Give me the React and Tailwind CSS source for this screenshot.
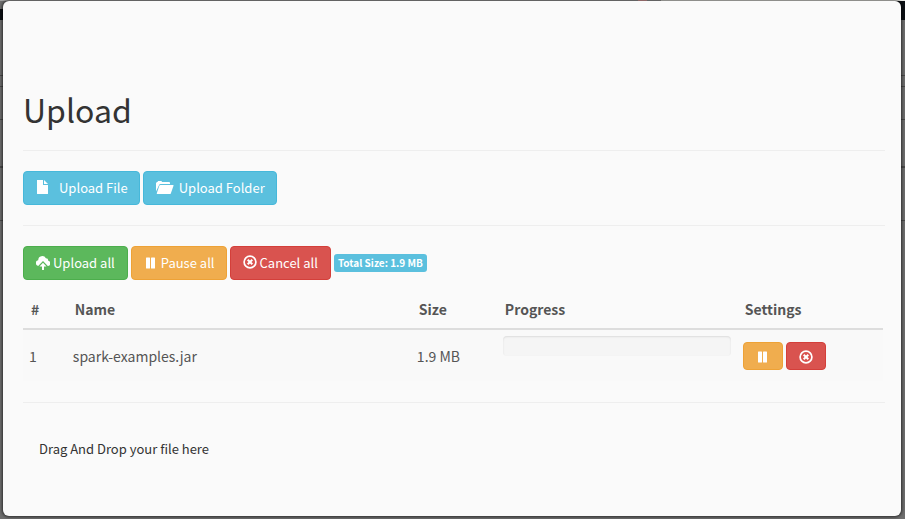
import React from "react";

function Icon({ children, className = "" }) {
  return (
    <svg viewBox="0 0 14 14" aria-hidden="true" className={`h-3.5 w-3.5 shrink-0 fill-current ${className}`}>
      {children}
    </svg>
  );
}

function FileIcon() {
  return (
    <Icon className="mb-0.5">
      <path d="M1 0h6v5h5v8.500a.5.500 0 0 1-.5.500H1.500a.5.500 0 0 1-.5-.5z" />
      <path d="M8 0l4 4H8z" />
    </Icon>
  );
}

function FolderIcon() {
  return (
    <svg viewBox="0 0 18 14" aria-hidden="true" className="mb-0.5 h-3.5 w-[18px] shrink-0 fill-current">
      <path d="M0 11.500V3l1-1h.5l.500-1h3.500l.500 1H13a1 1 0 0 1 1 1v1H4.500a1.500 1.500 0 0 0-1.400 1z" />
      <path d="M4.300 5H17a.5.5 0 0 1 .5.700l-2.700 7.700a1 1 0 0 1-.9.600H1.200a.5.5 0 0 1-.4-.7l2.600-7.700a1 1 0 0 1 .9-.6z" />
    </svg>
  );
}

function CloudUploadIcon() {
  return (
    <Icon>
      <path d="M2.200 10L7 5 11.800 10a2.700 2.700 0 0 0 .5-5.300A2.400 2.400 0 0 0 9.900 2.300 4.100 4.100 0 0 0 2.200 4.200 2.950 2.950 0 0 0 2.200 10z" />
      <path d="M7 6.700l3.500 3.800H8V13.500a.5.500 0 0 1-.5.500h-1a.5.500 0 0 1-.5-.5v-3H3.500z" />
    </Icon>
  );
}

function PauseIcon() {
  return (
    <Icon>
      <rect x="2" y="1.500" width="4" height="11" rx="0.5" />
      <rect x="7" y="1.500" width="4" height="11" rx="0.5" />
    </Icon>
  );
}

function RemoveCircleIcon({ className = "" }) {
  return (
    <Icon className={className}>
      <circle cx="7" cy="7" r="5.900" fill="none" stroke="currentColor" strokeWidth="1.700" />
      <path d="M4.700 4.700l4.600 4.600M9.300 4.700L4.700 9.300" stroke="currentColor" strokeWidth="2" />
    </Icon>
  );
}

const tones = {
  info: "border-[#46b8da] bg-[#5bc0de]",
  success: "border-[#4cae4c] bg-[#5cb85c]",
  warning: "border-[#eea236] bg-[#f0ad4e]",
  danger: "border-[#d43f3a] bg-[#d9534f]",
};

function Button({ tone, className = "", children, ...rest }) {
  return (
    <button
      type="button"
      className={`flex items-center justify-center rounded border text-[13px] whitespace-nowrap text-white ${tones[tone]} ${className}`}
      {...rest}
    >
      {children}
    </button>
  );
}

function Backdrop() {
  return (
    <div aria-hidden="true" className="absolute inset-0 flex flex-col bg-[#6e6e6e]">
      <div className="flex h-px">
        <div className="grow-[705] bg-[#a3a3a3]" />
        <div className="grow-[10] bg-[#e8a8a8]" />
        <div className="grow-[15] bg-[#a3a3a3]" />
        <div className="grow-[270] bg-[#e9e9e4]" />
      </div>
      <div className="flex h-[19px] justify-between">
        <div className="mt-2 w-1.5 bg-[#0c1014]" />
        <div className="w-2 bg-[#0c1014]" />
      </div>
      <div className="h-14 border-b border-[#4a4a4a]" />
      <div className="h-[11px] border-b border-[#4a4a4a]" />
      <div className="h-[33px] border-b border-[#4a4a4a]" />
      <div className="h-12 border-b-2 border-[#4a4a4a]" />
      <div className="h-[53px] border-b border-[#4a4a4a]" />
    </div>
  );
}

export default function App() {
  return (
    <div className="relative min-h-screen pt-px pr-1 pb-[3px] pl-[3px] font-['Noto_Sans_CJK_SC',sans-serif] text-[#333]">
      <Backdrop />
      <main
        role="dialog"
        aria-labelledby="title"
        className="relative rounded-md bg-[#fafafa] pt-20 pr-4 pb-[57px] pl-5 shadow-[0_0_3px_1px_rgba(0,0,0,0.6)]"
      >
        <h1 id="title" className="text-[32px] leading-[56px]">Upload</h1>
        <hr className="mt-[13px] mb-5 border-[#eee]" />
        <div className="flex gap-[3px]">
          <Button tone="info" className="h-[34px] gap-[9px] pr-[11px] pl-3">
            <FileIcon />
            Upload File
          </Button>
          <Button tone="info" className="h-[34px] gap-[5px] pr-[11px] pl-3">
            <FolderIcon />
            Upload Folder
          </Button>
        </div>
        <hr className="my-5 border-[#eee]" />
        <div className="flex items-center gap-[3px]">
          <Button tone="success" className="h-[34px] gap-[3px] px-3">
            <CloudUploadIcon />
            Upload all
          </Button>
          <Button tone="warning" className="h-[34px] gap-[3px] pr-[11px] pl-3">
            <PauseIcon />
            Pause all
          </Button>
          <Button tone="danger" className="h-[34px] gap-[3px] px-3">
            <RemoveCircleIcon className="mb-0.5" />
            Cancel all
          </Button>
          <span className="rounded-[3px] bg-[#5bc0de] px-1 text-[10px] leading-[18px] font-bold text-white">
            Total Size: 1.9 MB
          </span>
        </div>
        <div className="mt-2.5 pr-0.5">
          <table className="w-full table-fixed border-collapse text-left text-sm text-[#555]">
            <colgroup>
              <col className="w-[5.1%]" />
              <col className="w-[40%]" />
              <col className="w-[10%]" />
              <col className="w-[27.9%]" />
              <col className="w-[17%]" />
            </colgroup>
            <thead>
              <tr className="h-[39px] border-b-2 border-[#ddd]">
                <th className="px-2 font-bold">#</th>
                <th className="px-2 font-bold">Name</th>
                <th className="px-2 font-bold">Size</th>
                <th className="px-2 font-bold">Progress</th>
                <th className="px-2 font-bold">Settings</th>
              </tr>
            </thead>
            <tbody>
              <tr className="h-[52px] bg-[#f9f9f9]">
                <td className="px-1.5">1</td>
                <td className="px-1.5">spark-examples.jar</td>
                <td className="px-1.5">1.9 MB</td>
                <td className="px-1.5 pt-1.5 align-top">
                  <div
                    role="progressbar"
                    aria-label="Upload progress"
                    aria-valuenow={0}
                    className="h-5 rounded bg-[#f5f5f5] shadow-[inset_0_1px_2px_rgba(0,0,0,0.1)]"
                  />
                </td>
                <td className="px-1.5">
                  <div className="flex gap-[3px]">
                    <Button tone="warning" className="h-7 w-10 pt-0.5" aria-label="Pause">
                      <PauseIcon />
                    </Button>
                    <Button tone="danger" className="h-7 w-10 pt-0.5" aria-label="Cancel">
                      <RemoveCircleIcon />
                    </Button>
                  </div>
                </td>
              </tr>
            </tbody>
          </table>
        </div>
        <hr className="mt-[21px] mb-9 border-[#eee]" />
        <p className="px-4 text-[13px] leading-5">Drag And Drop your file here</p>
      </main>
    </div>
  );
}
